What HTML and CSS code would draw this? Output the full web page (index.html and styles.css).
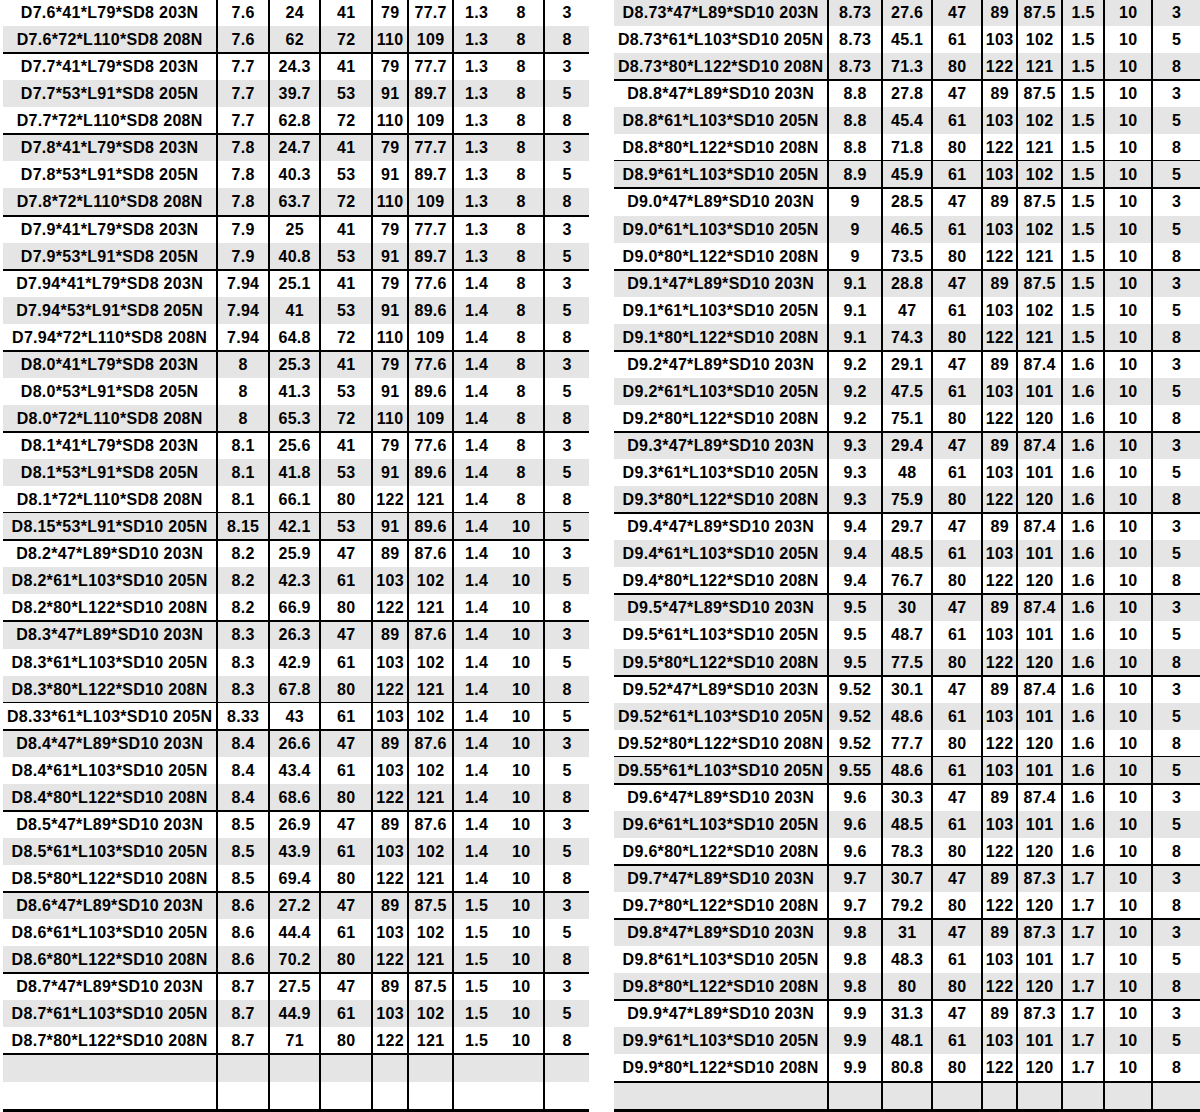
FILE: index.html
```html
<!DOCTYPE html>
<html lang="en">
<head>
<meta charset="utf-8">
<title>Spec table</title>
<link rel="stylesheet" href="styles.css">
</head>
<body>
<div class="page">
  <div class="tbl left">
    <div class="row"><div>D7.6*41*L79*SD8 203N</div><div>7.6</div><div>24</div><div>41</div><div>79</div><div>77.7</div><div>1.3</div><div>8</div><div>3</div></div>
    <div class="row g end"><div>D7.6*72*L110*SD8 208N</div><div>7.6</div><div>62</div><div>72</div><div>110</div><div>109</div><div>1.3</div><div>8</div><div>8</div></div>
    <div class="row"><div>D7.7*41*L79*SD8 203N</div><div>7.7</div><div>24.3</div><div>41</div><div>79</div><div>77.7</div><div>1.3</div><div>8</div><div>3</div></div>
    <div class="row g"><div>D7.7*53*L91*SD8 205N</div><div>7.7</div><div>39.7</div><div>53</div><div>91</div><div>89.7</div><div>1.3</div><div>8</div><div>5</div></div>
    <div class="row end"><div>D7.7*72*L110*SD8 208N</div><div>7.7</div><div>62.8</div><div>72</div><div>110</div><div>109</div><div>1.3</div><div>8</div><div>8</div></div>
    <div class="row g"><div>D7.8*41*L79*SD8 203N</div><div>7.8</div><div>24.7</div><div>41</div><div>79</div><div>77.7</div><div>1.3</div><div>8</div><div>3</div></div>
    <div class="row"><div>D7.8*53*L91*SD8 205N</div><div>7.8</div><div>40.3</div><div>53</div><div>91</div><div>89.7</div><div>1.3</div><div>8</div><div>5</div></div>
    <div class="row g end"><div>D7.8*72*L110*SD8 208N</div><div>7.8</div><div>63.7</div><div>72</div><div>110</div><div>109</div><div>1.3</div><div>8</div><div>8</div></div>
    <div class="row"><div>D7.9*41*L79*SD8 203N</div><div>7.9</div><div>25</div><div>41</div><div>79</div><div>77.7</div><div>1.3</div><div>8</div><div>3</div></div>
    <div class="row g end"><div>D7.9*53*L91*SD8 205N</div><div>7.9</div><div>40.8</div><div>53</div><div>91</div><div>89.7</div><div>1.3</div><div>8</div><div>5</div></div>
    <div class="row"><div>D7.94*41*L79*SD8 203N</div><div>7.94</div><div>25.1</div><div>41</div><div>79</div><div>77.6</div><div>1.4</div><div>8</div><div>3</div></div>
    <div class="row g"><div>D7.94*53*L91*SD8 205N</div><div>7.94</div><div>41</div><div>53</div><div>91</div><div>89.6</div><div>1.4</div><div>8</div><div>5</div></div>
    <div class="row end"><div>D7.94*72*L110*SD8 208N</div><div>7.94</div><div>64.8</div><div>72</div><div>110</div><div>109</div><div>1.4</div><div>8</div><div>8</div></div>
    <div class="row g"><div>D8.0*41*L79*SD8 203N</div><div>8</div><div>25.3</div><div>41</div><div>79</div><div>77.6</div><div>1.4</div><div>8</div><div>3</div></div>
    <div class="row"><div>D8.0*53*L91*SD8 205N</div><div>8</div><div>41.3</div><div>53</div><div>91</div><div>89.6</div><div>1.4</div><div>8</div><div>5</div></div>
    <div class="row g end"><div>D8.0*72*L110*SD8 208N</div><div>8</div><div>65.3</div><div>72</div><div>110</div><div>109</div><div>1.4</div><div>8</div><div>8</div></div>
    <div class="row"><div>D8.1*41*L79*SD8 203N</div><div>8.1</div><div>25.6</div><div>41</div><div>79</div><div>77.6</div><div>1.4</div><div>8</div><div>3</div></div>
    <div class="row g"><div>D8.1*53*L91*SD8 205N</div><div>8.1</div><div>41.8</div><div>53</div><div>91</div><div>89.6</div><div>1.4</div><div>8</div><div>5</div></div>
    <div class="row end"><div>D8.1*72*L110*SD8 208N</div><div>8.1</div><div>66.1</div><div>80</div><div>122</div><div>121</div><div>1.4</div><div>8</div><div>8</div></div>
    <div class="row g end"><div>D8.15*53*L91*SD10 205N</div><div>8.15</div><div>42.1</div><div>53</div><div>91</div><div>89.6</div><div>1.4</div><div>10</div><div>5</div></div>
    <div class="row"><div>D8.2*47*L89*SD10 203N</div><div>8.2</div><div>25.9</div><div>47</div><div>89</div><div>87.6</div><div>1.4</div><div>10</div><div>3</div></div>
    <div class="row g"><div>D8.2*61*L103*SD10 205N</div><div>8.2</div><div>42.3</div><div>61</div><div>103</div><div>102</div><div>1.4</div><div>10</div><div>5</div></div>
    <div class="row end"><div>D8.2*80*L122*SD10 208N</div><div>8.2</div><div>66.9</div><div>80</div><div>122</div><div>121</div><div>1.4</div><div>10</div><div>8</div></div>
    <div class="row g"><div>D8.3*47*L89*SD10 203N</div><div>8.3</div><div>26.3</div><div>47</div><div>89</div><div>87.6</div><div>1.4</div><div>10</div><div>3</div></div>
    <div class="row"><div>D8.3*61*L103*SD10 205N</div><div>8.3</div><div>42.9</div><div>61</div><div>103</div><div>102</div><div>1.4</div><div>10</div><div>5</div></div>
    <div class="row g end"><div>D8.3*80*L122*SD10 208N</div><div>8.3</div><div>67.8</div><div>80</div><div>122</div><div>121</div><div>1.4</div><div>10</div><div>8</div></div>
    <div class="row end"><div>D8.33*61*L103*SD10 205N</div><div>8.33</div><div>43</div><div>61</div><div>103</div><div>102</div><div>1.4</div><div>10</div><div>5</div></div>
    <div class="row g"><div>D8.4*47*L89*SD10 203N</div><div>8.4</div><div>26.6</div><div>47</div><div>89</div><div>87.6</div><div>1.4</div><div>10</div><div>3</div></div>
    <div class="row"><div>D8.4*61*L103*SD10 205N</div><div>8.4</div><div>43.4</div><div>61</div><div>103</div><div>102</div><div>1.4</div><div>10</div><div>5</div></div>
    <div class="row g end"><div>D8.4*80*L122*SD10 208N</div><div>8.4</div><div>68.6</div><div>80</div><div>122</div><div>121</div><div>1.4</div><div>10</div><div>8</div></div>
    <div class="row"><div>D8.5*47*L89*SD10 203N</div><div>8.5</div><div>26.9</div><div>47</div><div>89</div><div>87.6</div><div>1.4</div><div>10</div><div>3</div></div>
    <div class="row g"><div>D8.5*61*L103*SD10 205N</div><div>8.5</div><div>43.9</div><div>61</div><div>103</div><div>102</div><div>1.4</div><div>10</div><div>5</div></div>
    <div class="row end"><div>D8.5*80*L122*SD10 208N</div><div>8.5</div><div>69.4</div><div>80</div><div>122</div><div>121</div><div>1.4</div><div>10</div><div>8</div></div>
    <div class="row g"><div>D8.6*47*L89*SD10 203N</div><div>8.6</div><div>27.2</div><div>47</div><div>89</div><div>87.5</div><div>1.5</div><div>10</div><div>3</div></div>
    <div class="row"><div>D8.6*61*L103*SD10 205N</div><div>8.6</div><div>44.4</div><div>61</div><div>103</div><div>102</div><div>1.5</div><div>10</div><div>5</div></div>
    <div class="row g end"><div>D8.6*80*L122*SD10 208N</div><div>8.6</div><div>70.2</div><div>80</div><div>122</div><div>121</div><div>1.5</div><div>10</div><div>8</div></div>
    <div class="row"><div>D8.7*47*L89*SD10 203N</div><div>8.7</div><div>27.5</div><div>47</div><div>89</div><div>87.5</div><div>1.5</div><div>10</div><div>3</div></div>
    <div class="row g"><div>D8.7*61*L103*SD10 205N</div><div>8.7</div><div>44.9</div><div>61</div><div>103</div><div>102</div><div>1.5</div><div>10</div><div>5</div></div>
    <div class="row end"><div>D8.7*80*L122*SD10 208N</div><div>8.7</div><div>71</div><div>80</div><div>122</div><div>121</div><div>1.5</div><div>10</div><div>8</div></div>
    <div class="row g"><div></div><div></div><div></div><div></div><div></div><div></div><div></div><div></div><div></div></div>
    <div class="row"><div></div><div></div><div></div><div></div><div></div><div></div><div></div><div></div><div></div></div>
  </div>

  <div class="tbl right">
    <div class="row g"><div>D8.73*47*L89*SD10 203N</div><div>8.73</div><div>27.6</div><div>47</div><div>89</div><div>87.5</div><div>1.5</div><div>10</div><div>3</div></div>
    <div class="row"><div>D8.73*61*L103*SD10 205N</div><div>8.73</div><div>45.1</div><div>61</div><div>103</div><div>102</div><div>1.5</div><div>10</div><div>5</div></div>
    <div class="row g end"><div>D8.73*80*L122*SD10 208N</div><div>8.73</div><div>71.3</div><div>80</div><div>122</div><div>121</div><div>1.5</div><div>10</div><div>8</div></div>
    <div class="row"><div>D8.8*47*L89*SD10 203N</div><div>8.8</div><div>27.8</div><div>47</div><div>89</div><div>87.5</div><div>1.5</div><div>10</div><div>3</div></div>
    <div class="row g"><div>D8.8*61*L103*SD10 205N</div><div>8.8</div><div>45.4</div><div>61</div><div>103</div><div>102</div><div>1.5</div><div>10</div><div>5</div></div>
    <div class="row end"><div>D8.8*80*L122*SD10 208N</div><div>8.8</div><div>71.8</div><div>80</div><div>122</div><div>121</div><div>1.5</div><div>10</div><div>8</div></div>
    <div class="row g end"><div>D8.9*61*L103*SD10 205N</div><div>8.9</div><div>45.9</div><div>61</div><div>103</div><div>102</div><div>1.5</div><div>10</div><div>5</div></div>
    <div class="row"><div>D9.0*47*L89*SD10 203N</div><div>9</div><div>28.5</div><div>47</div><div>89</div><div>87.5</div><div>1.5</div><div>10</div><div>3</div></div>
    <div class="row g"><div>D9.0*61*L103*SD10 205N</div><div>9</div><div>46.5</div><div>61</div><div>103</div><div>102</div><div>1.5</div><div>10</div><div>5</div></div>
    <div class="row end"><div>D9.0*80*L122*SD10 208N</div><div>9</div><div>73.5</div><div>80</div><div>122</div><div>121</div><div>1.5</div><div>10</div><div>8</div></div>
    <div class="row g"><div>D9.1*47*L89*SD10 203N</div><div>9.1</div><div>28.8</div><div>47</div><div>89</div><div>87.5</div><div>1.5</div><div>10</div><div>3</div></div>
    <div class="row"><div>D9.1*61*L103*SD10 205N</div><div>9.1</div><div>47</div><div>61</div><div>103</div><div>102</div><div>1.5</div><div>10</div><div>5</div></div>
    <div class="row g end"><div>D9.1*80*L122*SD10 208N</div><div>9.1</div><div>74.3</div><div>80</div><div>122</div><div>121</div><div>1.5</div><div>10</div><div>8</div></div>
    <div class="row"><div>D9.2*47*L89*SD10 203N</div><div>9.2</div><div>29.1</div><div>47</div><div>89</div><div>87.4</div><div>1.6</div><div>10</div><div>3</div></div>
    <div class="row g"><div>D9.2*61*L103*SD10 205N</div><div>9.2</div><div>47.5</div><div>61</div><div>103</div><div>101</div><div>1.6</div><div>10</div><div>5</div></div>
    <div class="row end"><div>D9.2*80*L122*SD10 208N</div><div>9.2</div><div>75.1</div><div>80</div><div>122</div><div>120</div><div>1.6</div><div>10</div><div>8</div></div>
    <div class="row g"><div>D9.3*47*L89*SD10 203N</div><div>9.3</div><div>29.4</div><div>47</div><div>89</div><div>87.4</div><div>1.6</div><div>10</div><div>3</div></div>
    <div class="row"><div>D9.3*61*L103*SD10 205N</div><div>9.3</div><div>48</div><div>61</div><div>103</div><div>101</div><div>1.6</div><div>10</div><div>5</div></div>
    <div class="row g end"><div>D9.3*80*L122*SD10 208N</div><div>9.3</div><div>75.9</div><div>80</div><div>122</div><div>120</div><div>1.6</div><div>10</div><div>8</div></div>
    <div class="row"><div>D9.4*47*L89*SD10 203N</div><div>9.4</div><div>29.7</div><div>47</div><div>89</div><div>87.4</div><div>1.6</div><div>10</div><div>3</div></div>
    <div class="row g"><div>D9.4*61*L103*SD10 205N</div><div>9.4</div><div>48.5</div><div>61</div><div>103</div><div>101</div><div>1.6</div><div>10</div><div>5</div></div>
    <div class="row end"><div>D9.4*80*L122*SD10 208N</div><div>9.4</div><div>76.7</div><div>80</div><div>122</div><div>120</div><div>1.6</div><div>10</div><div>8</div></div>
    <div class="row g"><div>D9.5*47*L89*SD10 203N</div><div>9.5</div><div>30</div><div>47</div><div>89</div><div>87.4</div><div>1.6</div><div>10</div><div>3</div></div>
    <div class="row"><div>D9.5*61*L103*SD10 205N</div><div>9.5</div><div>48.7</div><div>61</div><div>103</div><div>101</div><div>1.6</div><div>10</div><div>5</div></div>
    <div class="row g end"><div>D9.5*80*L122*SD10 208N</div><div>9.5</div><div>77.5</div><div>80</div><div>122</div><div>120</div><div>1.6</div><div>10</div><div>8</div></div>
    <div class="row"><div>D9.52*47*L89*SD10 203N</div><div>9.52</div><div>30.1</div><div>47</div><div>89</div><div>87.4</div><div>1.6</div><div>10</div><div>3</div></div>
    <div class="row g"><div>D9.52*61*L103*SD10 205N</div><div>9.52</div><div>48.6</div><div>61</div><div>103</div><div>101</div><div>1.6</div><div>10</div><div>5</div></div>
    <div class="row end"><div>D9.52*80*L122*SD10 208N</div><div>9.52</div><div>77.7</div><div>80</div><div>122</div><div>120</div><div>1.6</div><div>10</div><div>8</div></div>
    <div class="row g end"><div>D9.55*61*L103*SD10 205N</div><div>9.55</div><div>48.6</div><div>61</div><div>103</div><div>101</div><div>1.6</div><div>10</div><div>5</div></div>
    <div class="row"><div>D9.6*47*L89*SD10 203N</div><div>9.6</div><div>30.3</div><div>47</div><div>89</div><div>87.4</div><div>1.6</div><div>10</div><div>3</div></div>
    <div class="row g"><div>D9.6*61*L103*SD10 205N</div><div>9.6</div><div>48.5</div><div>61</div><div>103</div><div>101</div><div>1.6</div><div>10</div><div>5</div></div>
    <div class="row end"><div>D9.6*80*L122*SD10 208N</div><div>9.6</div><div>78.3</div><div>80</div><div>122</div><div>120</div><div>1.6</div><div>10</div><div>8</div></div>
    <div class="row g"><div>D9.7*47*L89*SD10 203N</div><div>9.7</div><div>30.7</div><div>47</div><div>89</div><div>87.3</div><div>1.7</div><div>10</div><div>3</div></div>
    <div class="row end"><div>D9.7*80*L122*SD10 208N</div><div>9.7</div><div>79.2</div><div>80</div><div>122</div><div>120</div><div>1.7</div><div>10</div><div>8</div></div>
    <div class="row g"><div>D9.8*47*L89*SD10 203N</div><div>9.8</div><div>31</div><div>47</div><div>89</div><div>87.3</div><div>1.7</div><div>10</div><div>3</div></div>
    <div class="row"><div>D9.8*61*L103*SD10 205N</div><div>9.8</div><div>48.3</div><div>61</div><div>103</div><div>101</div><div>1.7</div><div>10</div><div>5</div></div>
    <div class="row g end"><div>D9.8*80*L122*SD10 208N</div><div>9.8</div><div>80</div><div>80</div><div>122</div><div>120</div><div>1.7</div><div>10</div><div>8</div></div>
    <div class="row"><div>D9.9*47*L89*SD10 203N</div><div>9.9</div><div>31.3</div><div>47</div><div>89</div><div>87.3</div><div>1.7</div><div>10</div><div>3</div></div>
    <div class="row g"><div>D9.9*61*L103*SD10 205N</div><div>9.9</div><div>48.1</div><div>61</div><div>103</div><div>101</div><div>1.7</div><div>10</div><div>5</div></div>
    <div class="row end"><div>D9.9*80*L122*SD10 208N</div><div>9.9</div><div>80.8</div><div>80</div><div>122</div><div>120</div><div>1.7</div><div>10</div><div>8</div></div>
    <div class="row g"><div></div><div></div><div></div><div></div><div></div><div></div><div></div><div></div><div></div></div>
  </div>
</div>
</body>
</html>
```

FILE: styles.css
```css
html, body {
  margin: 0;
  padding: 0;
  background: #fff;
  overflow: hidden;
}

.page {
  display: flex;
  gap: 25px;
  padding-left: 3px;
  margin-top: -1px;
  font-family: "Liberation Sans", Arial, sans-serif;
  font-weight: bold;
  font-size: 16px;
  letter-spacing: 0.3px;
  color: #000;
}

.tbl {
  width: 586px;
  flex: none;
  border-bottom: 4px solid #000;
}

.row {
  display: grid;
  height: 27.07px;
  background: #fff;
}

.left .row {
  grid-template-columns: 215px 52px 51px 52px 36px 45px 45px 46px 44px;
}

.right .row {
  grid-template-columns: 215px 54px 50px 50px 35px 45px 42px 48px 47px;
}

.row.g {
  background: #e5e5e5;
}

.row.end {
  position: relative;
  box-shadow: inset 0 -1px 0 #000, 0 1px 0 #000;
}

.row > div {
  display: flex;
  align-items: center;
  justify-content: center;
  white-space: nowrap;
  box-sizing: border-box;
  border-right: 2px solid #000;
  padding: 1px 0 0 0.3px;
}

.row > div:last-child {
  border-right: none;
}

.left .row > div:nth-child(7) {
  border-right: none;
}
```
